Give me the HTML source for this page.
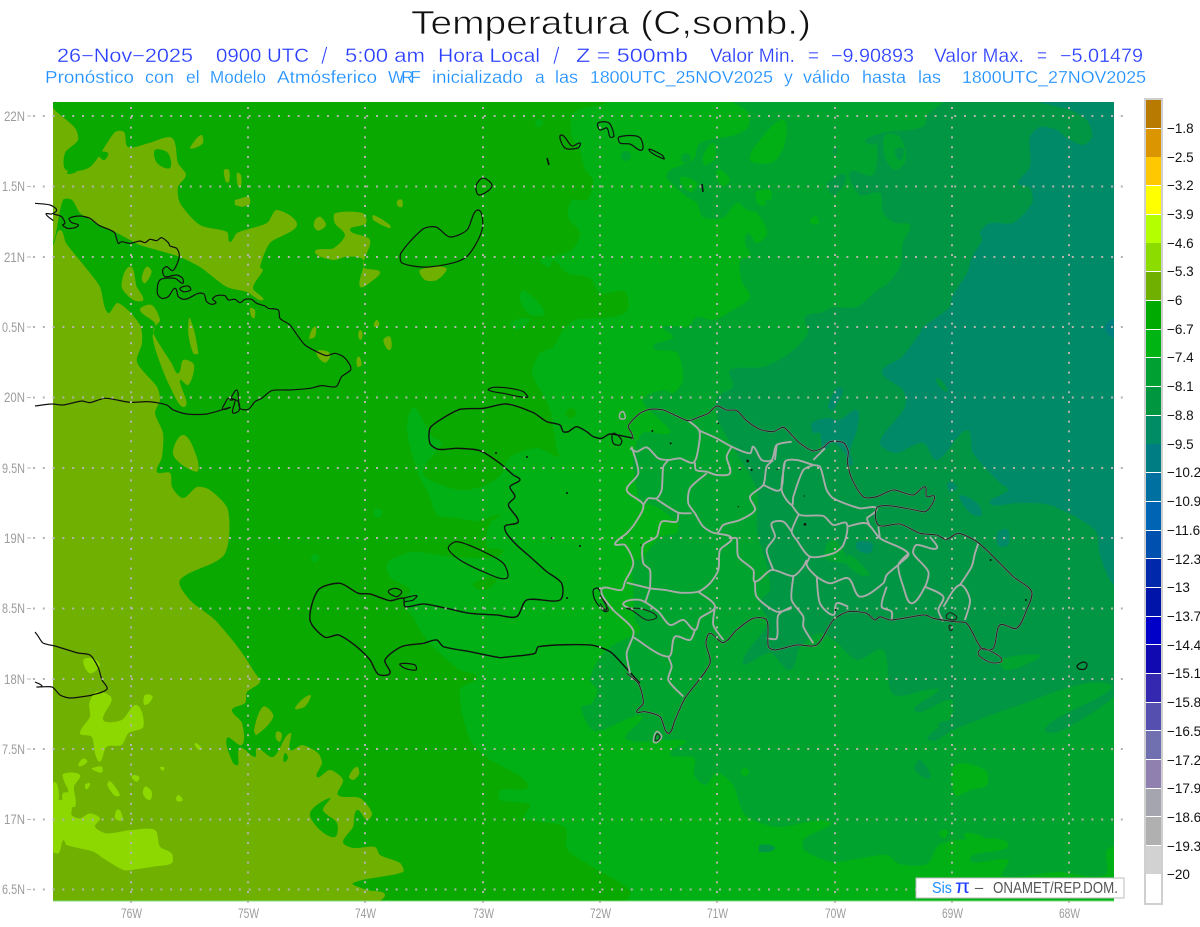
<!DOCTYPE html>
<html lang="es"><head><meta charset="utf-8"><title>Temperatura (C,somb.)</title>
<style>html,body{margin:0;padding:0;background:#fff}svg{display:block}text{font-family:"Liberation Sans",sans-serif}</style></head>
<body>
<svg width="1200" height="927" viewBox="0 0 1200 927" xmlns="http://www.w3.org/2000/svg">
<rect width="1200" height="927" fill="#fff"/>
<!-- titles -->
<text x="411" y="34" font-size="33" textLength="400" lengthAdjust="spacingAndGlyphs" fill="#111" stroke="#fff" stroke-width=".7">Temperatura (C,somb.)</text>
<g font-size="19" fill="#2b40ff" stroke="#fff" stroke-width=".25">
<text lengthAdjust="spacingAndGlyphs" x="57" y="62" textLength="136">26−Nov−2025</text><text lengthAdjust="spacingAndGlyphs" x="216" y="62" textLength="93">0900 UTC</text><text x="321" y="64" font-size="24" stroke-width=".7" textLength="12" lengthAdjust="spacing">/</text><text lengthAdjust="spacingAndGlyphs" x="345" y="62" textLength="80">5:00 am</text><text lengthAdjust="spacingAndGlyphs" x="438" y="62" textLength="102">Hora Local</text><text x="553" y="64" font-size="24" stroke-width=".7" textLength="11" lengthAdjust="spacing">/</text><text lengthAdjust="spacingAndGlyphs" x="576" y="62" textLength="112">Z = 500mb</text><text lengthAdjust="spacingAndGlyphs" x="710" y="62" textLength="85">Valor Min.</text><text lengthAdjust="spacingAndGlyphs" x="808" y="62" textLength="11">=</text><text lengthAdjust="spacingAndGlyphs" x="831" y="62" textLength="83">−9.90893</text><text lengthAdjust="spacingAndGlyphs" x="934" y="62" textLength="90">Valor Max.</text><text lengthAdjust="spacingAndGlyphs" x="1037" y="62" textLength="10">=</text><text lengthAdjust="spacingAndGlyphs" x="1060" y="62" textLength="83">−5.01479</text>
</g>
<g font-size="17.500" fill="#1e90ff" stroke="#fff" stroke-width=".2">
<text lengthAdjust="spacingAndGlyphs" x="45" y="83" textLength="89">Pronóstico</text><text lengthAdjust="spacingAndGlyphs" x="145" y="83" textLength="29">con</text><text x="186" y="83">el</text><text lengthAdjust="spacingAndGlyphs" x="210" y="83" textLength="56">Modelo</text><text lengthAdjust="spacingAndGlyphs" x="277" y="83" textLength="100">Atmósferico</text><text x="388" y="83" textLength="33" lengthAdjust="spacing">WRF</text><text lengthAdjust="spacingAndGlyphs" x="432" y="83" textLength="91">inicializado</text><text x="535" y="83">a</text><text lengthAdjust="spacingAndGlyphs" x="555" y="83" textLength="23">las</text><text lengthAdjust="spacingAndGlyphs" x="590" y="83" textLength="183">1800UTC_25NOV2025</text><text x="784" y="83">y</text><text lengthAdjust="spacingAndGlyphs" x="803" y="83" textLength="47">válido</text><text lengthAdjust="spacingAndGlyphs" x="862" y="83" textLength="44">hasta</text><text lengthAdjust="spacingAndGlyphs" x="918" y="83" textLength="23">las</text><text lengthAdjust="spacingAndGlyphs" x="962" y="83" textLength="184">1800UTC_27NOV2025</text>
</g>

<!-- field -->
<clipPath id="m"><rect x="53" y="102" width="1061" height="799"/></clipPath>
<g clip-path="url(#m)">
<rect x="53" y="102" width="1061" height="799" fill="#0aa900"/>
<g fill="#70b000">
<!-- upper olive -->
<polygon points="45,90 53,108 75,128 78,140 65,153 66,170 90,167 115,132 124,132 128,147 149,143 172,138 178,163 186,175 178,187 180,203 200,225 227,232 230,242 237,233 267,223 277,210 297,225 270,243 260,267 263,270 253,288 263,300 247,292 227,287 200,267 180,257 157,250 140,245 117,233 100,225 80,213 72,200 63,200 53,243 40,250"/>
<!-- west olive -->
<polygon points="40,252 53,245 60,230 66,243 77,257 90,273 100,287 108,313 118,303 140,325 142,343 137,362 157,387 160,400 155,413 163,433 162,457 157,472 170,473 172,487 183,498 197,487 210,490 228,510 224,555 180,580 190,600 215,620 240,650 255,673 260,682 247,692 245,703 232,710 242,723 242,745 227,738 233,763 238,765 240,748 255,757 257,748 273,757 290,733 290,750 302,745 318,753 322,763 317,777 330,770 343,780 338,795 360,798 372,813 367,820 357,810 353,827 343,842 353,848 375,847 380,855 400,863 403,872 353,883 367,890 385,895 367,905 40,915"/>
<!-- olive patches on dark (zoom 9 coords) -->
<g transform="translate(40,200) scale(.3333)">
<polygon points="270,200 290,260 310,300 280,300 245,260"/><polygon points="320,200 335,215 315,250 305,235"/>
<polygon points="300,330 335,315 360,360 345,380 340,400 395,490 415,520 430,480 462,495 445,555 420,540 435,620 390,560 350,460 338,410 345,370"/>
<polygon points="450,355 475,460 460,460 445,400"/><polygon points="430,705 470,770 470,815 400,765"/>
<polygon points="825,60 840,50 858,75 835,92 822,80"/><polygon points="885,40 970,40 978,70 930,90 990,120 970,200 1020,215 1000,240 960,260 970,180 920,170 880,180 825,155 880,145 915,105 885,70"/>
<polygon points="1000,45 1050,75 1050,85 1000,60"/><polygon points="585,0 625,0 610,20 590,15"/><polygon points="630,325 645,330 640,355"/>
<polygon points="825,380 825,410 808,415"/><polygon points="830,455 870,460 855,488"/><polygon points="1010,360 1018,375 1002,380"/>
<polygon points="960,390 968,400 962,420 955,405"/><polygon points="1030,420 1050,410 1050,450"/><polygon points="955,470 965,495 952,500"/>
</g>
<polygon points="201,135 203,143 195,148 190,148"/><polygon points="237,200 249,197 249,205 235,205"/><polygon points="224,170 229,170 229,182 226,182"/><polygon points="237,173 241,175 241,187 238,186"/><polygon points="398,200 402,200 402,207 397,205"/>
<!-- zoom6 olive patches on dark -->
<g transform="translate(0,650) scale(.3333)"><polygon points="790,170 820,200 770,255 762,240"/><polygon points="885,175 930,135 915,170"/><polygon points="830,245 845,250 840,275 828,265"/><polygon points="1070,350 1078,370 1060,390 1047,380"/></g>
<polygon points="420,270 446,268 437,280 425,280"/>
</g>
<!-- dark holes in olive -->
<g fill="#0aa900">
<polygon points="155,150 168,153 170,168 157,163"/><polygon points="67,173 80,160 76,172"/><polygon points="98,153 108,153 104,160"/><polygon points="87,142 100,140 95,146"/>
<polygon points="310,813 330,798 323,810 337,823 335,837 320,830"/><polygon points="285,753 288,758 284,762"/>
</g>
<!-- lime -->
<g fill="#8cd800" transform="translate(0,650) scale(.3333)">
<polygon points="150,455 175,450 190,450 215,470 215,495 240,505 270,490 300,505 285,530 320,550 395,540 465,540 480,590 515,610 515,640 460,650 395,660 370,660 310,625 280,605 200,585 190,570 175,610 150,595"/>
<polygon points="190,372 240,375 222,410 225,470 190,455 188,430 205,425 195,400"/><polygon points="150,400 170,400 175,450 150,455"/>
<polygon points="290,125 335,145 310,210 365,210 410,165 430,230 385,250 365,285 320,290 300,335 285,310 275,260 240,250 270,200 268,160"/>
<polygon points="435,135 458,140 435,165"/><polygon points="250,30 280,25 300,45 270,70"/><polygon points="585,280 605,295 597,300"/><polygon points="250,325 262,335 240,350 235,343"/><polygon points="275,355 305,350 305,368 280,360"/><polygon points="395,378 418,380 410,395"/><polygon points="330,393 360,435 345,438 322,405"/><polygon points="255,405 270,400 260,418"/><polygon points="435,410 455,425 450,450 430,435"/><polygon points="480,352 492,352 490,362"/><polygon points="535,435 548,450 535,455 528,447"/><polygon points="355,478 367,510 345,505"/>
</g>
<!-- level B -->
<polygon fill="#00b014" points="637,95 600,105 573,113 572,137 580,150 585,170 593,180 587,200 572,200 568,217 580,233 572,250 558,255 540,260 550,267 553,260 567,273 590,278 600,293 625,292 626,312 600,318 575,320 563,330 553,347 540,353 532,373 542,393 550,410 557,450 559,457 537,448 510,457 502,473 490,483 467,490 447,487 423,473 442,443 433,437 423,420 413,408 407,430 417,470 430,497 437,515 457,518 477,521 500,515 490,523 487,547 503,550 497,557 453,557 413,552 388,562 390,577 410,590 403,603 413,617 420,630 433,647 460,670 477,677 460,690 470,740 490,760 500,765 528,786 500,790 500,800 530,805 524,818 565,827 567,849 591,866 630,891 625,908 1125,910 1125,95"/>
<g fill="#00b014"><circle cx="539" cy="123" r="4"/><circle cx="378" cy="513" r="4.5"/><circle cx="315" cy="558" r="4"/><polygon points="523,290 545,313 530,315 520,300"/><polygon points="510,323 525,318 530,320 517,330"/></g>
<g fill="#0aa900"><circle cx="571" cy="413" r="5"/><polygon points="473,585 490,577 497,580 485,590"/></g>
<!-- level C -->
<polygon fill="#00a32e" points="723,95 748,112 748,127 735,135 700,143 693,160 670,170 667,178 687,197 697,203 703,217 723,218 737,203 747,210 757,213 767,233 757,243 748,233 745,243 750,255 740,260 742,282 750,297 733,310 713,320 697,317 687,327 663,327 673,337 653,347 677,353 683,380 673,393 663,390 643,400 660,420 670,433 643,433 633,457 640,505 643,503 657,507 677,523 677,533 660,537 643,557 633,563 633,583 635,620 640,630 610,647 598,660 590,680 597,690 591,704 581,707 595,731 642,716 626,739 686,741 670,754 694,758 694,775 705,785 717,773 733,785 745,815 777,827 830,822 804,839 804,850 832,862 856,859 887,855 899,864 927,864 939,845 970,839 1008,845 970,859 1008,860 1002,876 1059,872 1105,875 1107,850 1125,840 1125,95"/>
<g fill="#00b014"><polygon points="750,160 760,140 783,120 785,143 773,162"/><polygon points="703,157 713,143 715,158 705,165"/><polygon points="680,178 697,183 690,192"/><polygon points="717,170 730,180 722,186"/><polygon points="755,194 770,190 770,200"/><polygon points="810,222 816,216 818,224"/><polygon points="757,195 763,196 765,205 757,203"/><polygon points="965,833 980,835 985,840 965,838"/><polygon points="955,765 985,770 987,785 970,790 955,795"/><polygon points="939,833 947,830 945,838"/><circle cx="745" cy="772" r="4"/></g>
<g fill="#00a32e"><circle cx="626" cy="156" r="5"/><circle cx="686" cy="158" r="5"/><circle cx="804" cy="166" r="3"/></g>
<!-- level D -->
<polygon fill="#009644" points="960,95 927,115 925,125 910,130 887,132 865,140 872,145 877,143 873,175 850,172 860,195 880,193 883,213 895,223 910,225 903,243 900,267 888,283 877,290 857,307 833,307 823,312 805,317 808,333 790,353 763,367 730,370 733,387 717,397 718,420 733,447 757,490 757,530 767,567 770,590 760,603 768,623 743,663 770,653 790,670 800,647 820,633 837,643 857,660 883,650 893,694 927,690 939,690 915,711 951,700 951,717 927,738 935,741 951,731 1014,707 1109,684 1053,721 1045,731 1061,731 1109,701 1125,680 1125,95"/>
<g fill="#00a32e"><polygon points="885,135 900,137 906,160 895,170 885,157"/><polygon points="820,440 826,445 822,452"/><polygon points="1000,660 1040,655 1025,665 1005,670"/><polygon points="827,544 835,540 848,562 836,562 825,558"/><polygon points="850,555 870,575 860,575 845,562"/></g>
<polygon fill="#00a32e" points="745,666 770,660 775,675 750,678"/>
<g fill="#009644"><polygon points="827,185 845,175 835,195"/><polygon points="895,150 903,148 902,160 897,158"/><polygon points="833,151 837,148 835,155"/><polygon points="938,724 952,722 945,730"/><polygon points="760,845 775,848 760,852"/><polygon points="920,760 930,778 915,770"/><polygon points="866,575 870,580 862,580"/></g>
<!-- level E -->
<polygon fill="#008a68" points="1023,95 1070,110 1087,120 1092,137 1083,145 1067,138 1057,130 1040,127 1030,137 1030,167 1018,183 1030,188 1032,203 1013,223 990,223 980,232 982,240 972,257 967,273 952,297 950,307 933,320 922,328 920,333 902,357 882,372 903,390 905,407 880,442 895,453 923,443 937,460 967,430 973,453 1000,483 1008,490 990,503 1017,503 1050,505 1095,530 1100,555 1110,580 1125,595 1125,95"/>
<g fill="#008a68"><polygon points="812,423 827,418 840,420 857,410 857,430 850,450 853,465 848,465 845,453 833,443 823,450 820,433 813,433"/><polygon points="960,495 977,503 982,515 973,515 962,503"/><polygon points="998,532 1008,530 1008,545 998,545"/><polygon points="948,482 957,487 950,492"/><polygon points="857,542 872,543 870,553 858,550"/><polygon points="828,407 837,388 843,390 833,410"/></g>
<polygon fill="#009644" points="937,378 945,385 947,392 938,385"/>
<polygon fill="#007f80" points="1105,328 1118,318 1118,339"/>
</g>
<rect x="53" y="900.500" width="1061" height="1" fill="#7fdc80"/>

<!-- coast: Cuba etc -->
<g fill="none" stroke="#111" stroke-width="1.2" stroke-linejoin="round">
<g transform="translate(40,200) scale(.3333)">
<path vector-effect="non-scaling-stroke" d="M-15,10 30,15 50,30 35,42 18,42 40,62 M40,42 65,50 75,70 68,75 82,85 105,83 115,75 95,68 88,55 120,48 150,55 175,75 215,92 225,100 235,130 245,125 270,130 300,123 315,128 330,118 350,122 365,113 385,128 390,138 410,145 418,165 412,190 398,212 380,200 368,210 375,230 410,225 428,235 428,250 405,235 360,240 352,280 365,295 385,290 405,265 415,290 430,298 445,295 475,280 492,282 500,305 515,313 528,308 518,297 530,287 555,287 565,300 585,298 600,308 615,298 635,298 650,310 675,318 685,325 715,330 720,355 750,375 775,410 795,435 830,455 860,467 885,460 910,470 930,495 932,510 905,530 888,560 845,557 810,565 750,570 695,572 665,595 645,605 625,628 600,625 595,590 590,570 575,590 570,600 585,600 578,638 597,632 595,605 565,595 555,610 548,628 570,622 500,642 440,642 400,630 380,615 350,608 320,605 270,607 195,595 150,608 125,603 70,615 35,612 -15,618"/>
<path vector-effect="non-scaling-stroke" d="M420,265 445,258 452,270 430,275Z"/>
</g>
<!-- Bahamas / Turks -->
<path d="M478,210 482,230 465,258 429,267 402,263 401,253 423,229 436,227 450,237 467,230Z"/>
<path d="M476,186 483,178 492,186 479,195Z"/>
<path d="M561,135 565,148 578,148 580,143 572,146Z"/>
<path d="M598,123 609,123 614,136 610,137 607,128 600,130Z"/>
<path d="M619,137 639,137 642,150 630,144 620,143Z"/>
<path d="M649,150 662,155 664,159Z"/>
<path stroke-width="1.6" d="M547,158 549,165"/><path stroke-width="1.6" d="M702,184 703,192"/>
<path d="M1077,666 1083,662 1087,664 1085,669 1079,669Z"/>
<!-- Jamaica -->
<path d="M35,682 42,686 37,687 52,687 60,695 70,698 87,696 92,695 107,689 102,680 98,667 90,655 78,653 68,650 55,646 43,643 38,636 35,632"/>
<!-- Haiti -->
<g transform="translate(290,390) scale(.3333)">
<path vector-effect="non-scaling-stroke" stroke-width="1.4" d="M1030,145 960,132 935,145 910,140 890,125 860,110 835,125 820,125 810,105 770,95 730,68 650,42 580,55 510,58 450,90 420,115 420,160 445,178 500,175 570,182 630,220 670,255 690,270 660,290 675,320 655,345 685,395 645,408 650,430 680,465 720,500 770,545 815,580 810,630 710,630 680,680 620,675 540,670 470,655 400,642 345,650 340,625 300,632 240,612 205,610 150,580 85,600 60,690 105,742 145,735 200,770 240,810 265,853 300,850 285,810 335,770 400,760 440,750 460,770 540,785 630,803 660,800 735,790 745,770 900,765 960,785 1000,825 1050,880"/>
<path vector-effect="non-scaling-stroke" d="M475,475 500,455 570,480 640,520 650,565 580,545 510,510Z"/>
<path vector-effect="non-scaling-stroke" d="M595,0 640,10 712,22 700,5 660,-5 610,-8Z"/>
<path vector-effect="non-scaling-stroke" d="M295,605 315,595 335,605 320,620Z"/>
<path vector-effect="non-scaling-stroke" d="M330,822 375,825 378,840 345,835Z"/>
<path vector-effect="non-scaling-stroke" d="M340,625 380,617 370,630 345,635"/>
<path vector-effect="non-scaling-stroke" d="M910,600 925,595 950,650 945,665 915,630Z"/>
<path vector-effect="non-scaling-stroke" d="M970,130 995,150 990,165 970,160Z"/>
</g>
<g fill="#111" stroke="none"><circle cx="496" cy="453" r="1"/><circle cx="527" cy="457" r="1"/><circle cx="567" cy="493" r="1"/><circle cx="552" cy="538" r="1"/><circle cx="580" cy="546" r="1"/><circle cx="567" cy="598" r="1"/></g>
</g>

<!-- DR provinces -->
<g transform="translate(600,390) scale(.3333)" fill="none" stroke-linejoin="round">
<path vector-effect="non-scaling-stroke" stroke="#aaa" stroke-width="1.9" d="M95,170 115,250 80,300 130,345 105,400 80,430 45,462 75,465 100,520 75,575 65,600 5,597 35,655 100,722 80,790 90,850
M90,175 110,185 140,172 175,205 205,210 240,205 280,218 295,175 298,122 265,92
M298,122 350,145 395,170 450,190 460,170 485,210 515,210 530,165 575,155
M395,170 380,200 390,250 350,255 320,245 288,240 285,218
M320,250 270,295 265,340 285,370 310,410 350,430 370,405 420,390 465,360 450,320 490,285 500,230 520,210
M205,210 190,230 185,300 170,325 145,325 130,345
M170,328 235,368 275,370
M235,368 230,395 185,395 170,440 130,465 130,520 150,540 150,595
M350,430 395,445 360,480 355,540 330,580 295,605 240,608 195,600 150,595 80,578
M395,445 410,445 415,500 460,540 465,575 515,540 580,558 610,530 620,510
M465,575 470,620 530,665 575,655
M150,595 135,640
M295,605 345,650 300,685 285,720 250,690 210,705 175,665 120,630 70,640 100,660
M345,650 340,705 370,750
M285,720 270,750 225,740 205,800 100,742
M205,800 215,830 205,870 250,920
M490,285 540,300 555,215 590,210 640,225 660,230 680,300 700,325 780,355 830,355 800,385
M555,215 545,300 575,345 580,320 610,240 640,225
M575,345 600,375 670,378 700,405 740,400 730,465 700,490 630,500 590,450 575,425 595,375
M575,425 550,395 515,400 525,440 500,480 520,540
M630,500 620,525 650,560 690,580 745,565 780,620 850,580 860,555 900,520 925,490 840,445 800,400 740,410
M800,385 810,410 M840,445 835,410
M925,490 895,525 910,590 935,640 975,590 985,545 940,490 950,465 1010,475 990,440
M975,590 1030,620 1015,660 1030,695
M1030,650 1080,585 1110,630 1095,690
M1080,585 1115,530 1125,490 1135,460
M860,590 845,650 875,665 875,690
M650,560 660,640 700,675 710,640 745,650
M580,558 575,630 610,680 610,710 640,760
M575,650 535,675 530,745 500,745
M530,165 525,210 M640,210 675,175"/>
<path vector-effect="non-scaling-stroke" stroke="#aaa" stroke-width="1.6" d="M100,148 95,130 85,108 120,70 150,58 190,60 230,78 265,92 300,80 325,70 350,48 380,60 410,62 440,92 480,118 520,125 550,112 575,135 600,160 640,183 670,172 690,155 730,158 745,185 742,215 755,265 790,320 830,320 880,300 940,315 975,290 980,320 1003,318 995,345 975,365 945,360 835,350 835,405 900,402 960,430 1010,435 1040,448 1075,430 1130,455 1170,490 1240,560 1295,605 1280,660 1250,715 1200,705 1180,775 1145,775 1100,700 1060,695 1000,685 975,675 910,685 870,690 840,680 825,690 800,670 745,665 700,690 650,765 590,765 525,780 505,770 500,690 460,685 410,720 370,758 330,730 318,760 330,820 255,925 225,990 205,1030 180,980 135,965 110,965 130,940 115,880 80,850"/>
<path vector-effect="non-scaling-stroke" stroke="#222" stroke-width="1.1" d="M100,148 95,130 85,108 120,70 150,58 190,60 230,78 265,92 300,80 325,70 350,48 380,60 410,62 440,92 480,118 520,125 550,112 575,135 600,160 640,183 670,172 690,155 730,158 745,185 742,215 755,265 790,320 830,320 880,300 940,315 975,290 980,320 1003,318 995,345 975,365 945,360 835,350 835,405 900,402 960,430 1010,435 1040,448 1075,430 1130,455 1170,490 1240,560 1295,605 1280,660 1250,715 1200,705 1180,775 1145,775 1100,700 1060,695 1000,685 975,675 910,685 870,690 840,680 825,690 800,670 745,665 700,690 650,765 590,765 525,780 505,770 500,690 460,685 410,720 370,758 330,730 318,760 330,820 255,925 225,990 205,1030 180,980 135,965 110,965 130,940 115,880 80,850"/>
<path vector-effect="non-scaling-stroke" stroke="#222" stroke-width="1.1" d="M80,655 130,658 170,680 140,690 95,660Z M0,615 25,660 20,665 0,640 M1040,675 1050,668 1070,680 1065,690 1040,685Z M1050,705 1058,715 1052,722 1047,712Z"/>
<path vector-effect="non-scaling-stroke" stroke="#aaa" stroke-width="1.5" d="M1135,785 1150,775 1200,800 1205,815 1175,818 1140,800Z M160,1055 170,1025 185,1040 170,1058Z M60,70 70,65 75,85 60,85Z"/>
<path vector-effect="non-scaling-stroke" stroke="#222" stroke-width="1" d="M1135,785 1150,775 1200,800 1205,815 1175,818 1140,800Z M165,1050 172,1032 180,1042 172,1052Z"/>
<g fill="#111"><circle cx="157" cy="123" r="3"/><circle cx="212" cy="160" r="3"/><circle cx="355" cy="100" r="2"/><circle cx="443" cy="213" r="4"/><circle cx="420" cy="237" r="3"/><circle cx="455" cy="240" r="3"/><circle cx="532" cy="238" r="2"/><circle cx="613" cy="318" r="2"/><circle cx="415" cy="350" r="2"/><circle cx="122" cy="465" r="2"/><circle cx="615" cy="403" r="4"/><circle cx="1172" cy="510" r="3"/><circle cx="1278" cy="630" r="3"/><circle cx="707" cy="660" r="3"/></g>
</g>

<!-- grid -->
<g stroke="#b4b4ac" stroke-width="2" stroke-dasharray="2 7.8" fill="none">
<path d="M33 116H1130M33 186.500H1130M33 257H1130M33 327H1130M33 397.500H1130M33 468H1130M33 538H1130M33 608.500H1130M33 679H1130M33 749H1130M33 819.500H1130M33 889.500H1130"/>
<path d="M131 107V906M248 107V906M365 107V906M483 107V906M600 107V906M717 107V906M835 107V906M952 107V906M1069 107V906"/>
</g>
<g stroke="#bbb" stroke-width="1"><path d="M27 116h4M27 186.500h4M27 257h4M27 327h4M27 397.500h4M27 468h4M27 538h4M27 608.500h4M27 679h4M27 749h4M27 819.500h4M27 889.500h4"/></g>

<!-- axis labels -->
<g font-size="14" fill="#9c9c9c">
<text lengthAdjust="spacingAndGlyphs" textLength="21" x="4" y="121">22N</text><text lengthAdjust="spacingAndGlyphs" textLength="23" x="2" y="191">1.5N</text><text lengthAdjust="spacingAndGlyphs" textLength="21" x="4" y="262">21N</text><text lengthAdjust="spacingAndGlyphs" textLength="23" x="2" y="332">0.5N</text><text lengthAdjust="spacingAndGlyphs" textLength="21" x="4" y="402">20N</text><text lengthAdjust="spacingAndGlyphs" textLength="23" x="2" y="473">9.5N</text><text lengthAdjust="spacingAndGlyphs" textLength="21" x="4" y="543">19N</text><text lengthAdjust="spacingAndGlyphs" textLength="23" x="2" y="613">8.5N</text><text lengthAdjust="spacingAndGlyphs" textLength="21" x="4" y="684">18N</text><text lengthAdjust="spacingAndGlyphs" textLength="23" x="2" y="754">7.5N</text><text lengthAdjust="spacingAndGlyphs" textLength="21" x="4" y="824">17N</text><text lengthAdjust="spacingAndGlyphs" textLength="23" x="2" y="894">6.5N</text>
</g>
<g font-size="14" fill="#9c9c9c">
<text lengthAdjust="spacingAndGlyphs" x="121" y="918" textLength="21">76W</text><text lengthAdjust="spacingAndGlyphs" x="238" y="918" textLength="21">75W</text><text lengthAdjust="spacingAndGlyphs" x="355" y="918" textLength="21">74W</text><text lengthAdjust="spacingAndGlyphs" x="473" y="918" textLength="21">73W</text><text lengthAdjust="spacingAndGlyphs" x="590" y="918" textLength="21">72W</text><text lengthAdjust="spacingAndGlyphs" x="707" y="918" textLength="21">71W</text><text lengthAdjust="spacingAndGlyphs" x="825" y="918" textLength="21">70W</text><text lengthAdjust="spacingAndGlyphs" x="942" y="918" textLength="21">69W</text><text lengthAdjust="spacingAndGlyphs" x="1059" y="918" textLength="21">68W</text>
</g>

<!-- logo box -->
<rect x="916" y="878" width="208" height="20" fill="#fff" stroke="#bdbdbd" stroke-width="1"/>
<text x="932" y="893" font-size="15.500" fill="#1e90ff" textLength="20" lengthAdjust="spacingAndGlyphs">Sis</text>
<text x="955" y="893" font-size="19" fill="#1c3cff" textLength="15" lengthAdjust="spacingAndGlyphs">π</text>
<text x="974" y="893" font-size="14" fill="#555" textLength="10" lengthAdjust="spacingAndGlyphs">−</text>
<text x="993" y="893" font-size="16" fill="#555" textLength="125" lengthAdjust="spacingAndGlyphs">ONAMET/REP.DOM.</text>

<!-- legend -->
<rect x="1145" y="99" width="17" height="805" fill="#fff" stroke="#cfcfcf" stroke-width="2"/>
<g>
<rect x="1146" y="100" width="15" height="28" fill="#b87a00"/><rect x="1146" y="129" width="15" height="28" fill="#db9500"/><rect x="1146" y="157" width="15" height="28" fill="#ffc800"/><rect x="1146" y="186" width="15" height="28" fill="#ffff00"/><rect x="1146" y="215" width="15" height="28" fill="#b4ff00"/><rect x="1146" y="243" width="15" height="28" fill="#8cdc00"/><rect x="1146" y="272" width="15" height="28" fill="#70b000"/><rect x="1146" y="301" width="15" height="28" fill="#00aa00"/><rect x="1146" y="330" width="15" height="27" fill="#00b414"/><rect x="1146" y="358" width="15" height="28" fill="#00a032"/><rect x="1146" y="387" width="15" height="28" fill="#009640"/><rect x="1146" y="416" width="15" height="28" fill="#008c64"/><rect x="1146" y="444" width="15" height="28" fill="#007d82"/><rect x="1146" y="473" width="15" height="28" fill="#0070a0"/><rect x="1146" y="502" width="15" height="28" fill="#0064b4"/><rect x="1146" y="531" width="15" height="27" fill="#0050b0"/><rect x="1146" y="559" width="15" height="28" fill="#0028aa"/><rect x="1146" y="588" width="15" height="28" fill="#0014aa"/><rect x="1146" y="617" width="15" height="27" fill="#0000c8"/><rect x="1146" y="645" width="15" height="28" fill="#1008b0"/><rect x="1146" y="674" width="15" height="28" fill="#3428b0"/><rect x="1146" y="703" width="15" height="27" fill="#5550b0"/><rect x="1146" y="731" width="15" height="28" fill="#7070b0"/><rect x="1146" y="760" width="15" height="28" fill="#9080b0"/><rect x="1146" y="789" width="15" height="27" fill="#a5a5b0"/><rect x="1146" y="817" width="15" height="28" fill="#b0b0b0"/><rect x="1146" y="846" width="15" height="28" fill="#d2d2d2"/>
</g>
<g font-size="13.500" fill="#111">
<text x="1167" y="133">−1.8</text><text x="1167" y="162">−2.5</text><text x="1167" y="190">−3.2</text><text x="1167" y="219">−3.9</text><text x="1167" y="248">−4.6</text><text x="1167" y="276">−5.3</text><text x="1167" y="305">−6</text><text x="1167" y="334">−6.7</text><text x="1167" y="362">−7.4</text><text x="1167" y="391">−8.1</text><text x="1167" y="420">−8.8</text><text x="1167" y="449">−9.5</text><text x="1167" y="477">−10.2</text><text x="1167" y="506">−10.9</text><text x="1167" y="535">−11.6</text><text x="1167" y="564">−12.3</text><text x="1167" y="592">−13</text><text x="1167" y="621">−13.7</text><text x="1167" y="650">−14.4</text><text x="1167" y="678">−15.1</text><text x="1167" y="707">−15.8</text><text x="1167" y="736">−16.5</text><text x="1167" y="765">−17.2</text><text x="1167" y="793">−17.9</text><text x="1167" y="822">−18.6</text><text x="1167" y="851">−19.3</text><text x="1167" y="879">−20</text>
</g>
</svg>
<script>
(function(){
var NS='http://www.w3.org/2000/svg';
function smooth(p,closed){
  var n=p.length;if(n<3)return 'M'+p.join(' L');
  var k=.25,d='M'+p[0][0]+' '+p[0][1],m=closed?n:n-1;
  function tan(i){
    var a=closed?p[(i-1+n)%n]:p[Math.max(i-1,0)],b=closed?p[(i+1)%n]:p[Math.min(i+1,n-1)];
    var x=b[0]-a[0],y=b[1]-a[1],l=Math.hypot(x,y)||1;return [x/l,y/l];
  }
  for(var i=0;i<m;i++){
    var j=(i+1)%n,s=Math.hypot(p[j][0]-p[i][0],p[j][1]-p[i][1])*k,t0=tan(i),t1=tan(j);
    d+=' C'+(p[i][0]+t0[0]*s).toFixed(1)+' '+(p[i][1]+t0[1]*s).toFixed(1)+' '+(p[j][0]-t1[0]*s).toFixed(1)+' '+(p[j][1]-t1[1]*s).toFixed(1)+' '+p[j][0]+' '+p[j][1];
  }
  return d+(closed?'Z':'');
}
function pts(s){var a=s.match(/-?[\d.]+/g)||[],r=[];for(var i=0;i+1<a.length;i+=2)r.push([+a[i],+a[i+1]]);return r;}
[].slice.call(document.querySelectorAll('polygon')).forEach(function(e){
  var q=document.createElementNS(NS,'path');
  if(e.getAttribute('fill'))q.setAttribute('fill',e.getAttribute('fill'));
  q.setAttribute('d',smooth(pts(e.getAttribute('points')),true));
  e.parentNode.replaceChild(q,e);
});
[].slice.call(document.querySelectorAll('path')).forEach(function(e){
  var d=e.getAttribute('d');
  if(d.indexOf(',')<0||d.indexOf('C')>=0)return;
  var out=d.split('M').filter(function(s){return s.trim();}).map(function(s){return smooth(pts(s),/Z/.test(s));}).join(' ');
  e.setAttribute('d',out);
});
})();
</script>
</body></html>
